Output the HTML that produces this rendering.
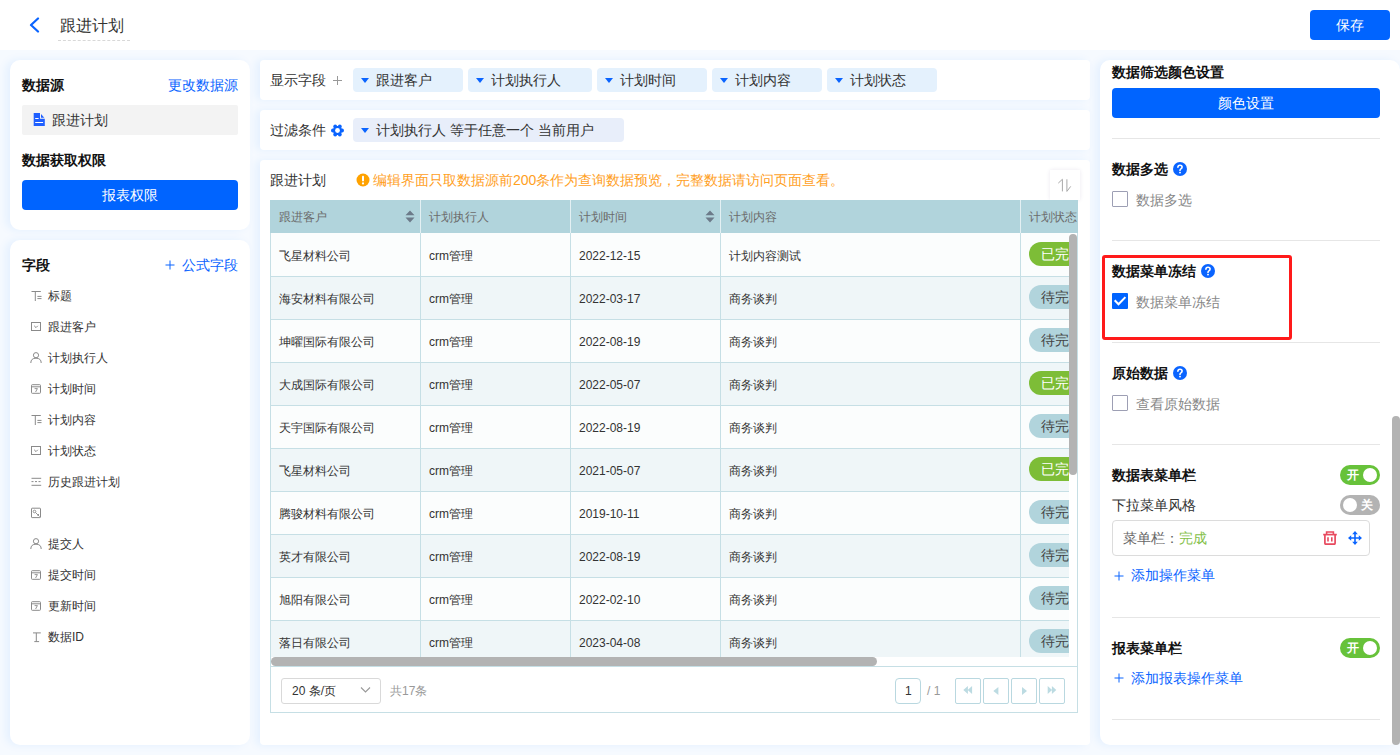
<!DOCTYPE html>
<html><head><meta charset="utf-8">
<style>
*{box-sizing:border-box;margin:0;padding:0}
html,body{width:1400px;height:755px;overflow:hidden}
body{position:relative;background:#f6faff;font-family:"Liberation Sans",sans-serif;font-size:14px;color:#333}
.a{position:absolute}
.t{position:absolute;white-space:nowrap;line-height:20px}
.panel{position:absolute;background:#fff;box-shadow:-4px 0 8px rgba(20,130,250,.08)}
.hdr{left:0;top:0;width:1400px;height:50px;background:#fff}
.b{font-weight:bold;color:#111}
.blue{color:#0a64ff}
.btn{position:absolute;background:#0064ff;color:#fff;border-radius:4px;text-align:center}
.chip{position:absolute;top:68px;height:24px;background:#e4f1fd;border-radius:4px}
.tri{position:absolute;left:8px;top:10px;width:0;height:0;border-left:4px solid transparent;border-right:4px solid transparent;border-top:5px solid #0a64ff}
.chip span{position:absolute;left:23px;top:2px;line-height:20px;white-space:nowrap;color:#333}
.fi{position:absolute;left:21px;height:20px;line-height:20px;font-size:12px;color:#333;white-space:nowrap}
.fi svg{position:absolute;left:10px;top:5px}
.fi span{position:absolute;left:27px;top:0}
.divr{position:absolute;left:12px;width:268px;height:1px;background:#e6e6e6}
.cb{position:absolute;width:16px;height:16px;border:1px solid #9d9fb4;border-radius:1px;background:#fff}
.gray{color:#888}
.q{position:absolute;width:14px;height:14px;border-radius:7px;background:#0a64ff}
.tg{position:absolute;width:40px;height:20px;border-radius:10px}
.tg .k{position:absolute;top:3px;width:14px;height:14px;border-radius:7px;background:#fff}
.tg span{position:absolute;top:0;line-height:20px;font-size:12px;color:#fff;font-weight:bold}
</style></head><body>
<svg width="0" height="0" style="position:absolute"><defs>
<symbol id="icT" viewBox="0 0 12 12"><path d="M1.5 1.5H10.8M5.3 1.5V11M7.4 6.4H11.5M7.4 8.6H11.5" stroke="#8a8a8a" stroke-width="1" fill="none"/></symbol>
<symbol id="icS" viewBox="0 0 12 12"><rect x="1.5" y="1.5" width="9" height="8" fill="none" stroke="#8a8a8a" stroke-width="1"/><path d="M4.2 4.8L6 6.6L7.8 4.8" stroke="#8a8a8a" stroke-width="1" fill="none"/></symbol>
<symbol id="icP" viewBox="0 0 12 12"><circle cx="6" cy="3.2" r="2.6" fill="none" stroke="#8a8a8a" stroke-width="1"/><path d="M0.8 11Q0.8 6.2 6 6.2Q11.2 6.2 11.2 11" fill="none" stroke="#8a8a8a" stroke-width="1"/></symbol>
<symbol id="icC" viewBox="0 0 12 12"><rect x="1.5" y="1.7" width="9" height="8.6" rx="0.8" fill="none" stroke="#8a8a8a" stroke-width="1"/><path d="M1.5 3.8H10.5" stroke="#8a8a8a" stroke-width="1"/><path d="M4.6 5.6H7.4L5.6 9" stroke="#8a8a8a" stroke-width=".9" fill="none"/></symbol>
<symbol id="icL" viewBox="0 0 12 12"><path d="M1.5 2.3H11.2M1.5 9.3H11.2" stroke="#8a8a8a" stroke-width="1"/><path d="M1.5 5.6H11.2" stroke="#8a8a8a" stroke-width="1" stroke-dasharray="2 1.5"/></symbol>
<symbol id="icI" viewBox="0 0 12 12"><rect x="1.5" y="1.2" width="9" height="9.4" rx="0.6" fill="none" stroke="#8a8a8a" stroke-width="1"/><circle cx="4.5" cy="4.5" r="1.3" fill="none" stroke="#8a8a8a" stroke-width=".9"/><path d="M5.5 5.5L9.5 9.5M7.5 8.5L9 7" stroke="#8a8a8a" stroke-width=".9"/></symbol>
<symbol id="icD" viewBox="0 0 12 12"><path d="M3 1.9H10.8M6.3 1.9V10.6M4.3 10.6H9.1" stroke="#8a8a8a" stroke-width="1" fill="none"/></symbol>
</defs></svg>
<!-- header -->
<div class="a hdr"></div>
<svg class="a" style="left:28px;top:17px" width="13" height="16" viewBox="0 0 13 16"><path d="M10 1.5 L3 8 L10 14.5" fill="none" stroke="#0a64ff" stroke-width="2.2" stroke-linecap="round" stroke-linejoin="round"/></svg>
<div class="t" style="left:60px;top:15px;font-size:16px;color:#333;line-height:22px">跟进计划</div>
<div class="a" style="left:58px;top:40px;width:72px;height:0;border-top:1px dashed #d8d8d8"></div>
<div class="btn" style="left:1310px;top:10px;width:80px;height:30px;line-height:30px">保存</div>

<!-- left panel 1 -->
<div class="panel" style="left:10px;top:60px;width:240px;height:170px;border-radius:10px"></div>
<div class="t b" style="left:22px;top:75px">数据源</div>
<div class="t blue" style="left:168px;top:75px">更改数据源</div>
<div class="a" style="left:22px;top:105px;width:216px;height:30px;background:#f3f3f3;border-radius:2px"></div>
<svg class="a" style="left:33px;top:113px" width="13" height="14" viewBox="0 0 13 14"><path d="M0.7 0H7V5.8H11.8V13.1H0.7Z" fill="#1f5fff"/><path d="M8 0.9L11.3 4.7H8Z" fill="#1f5fff"/><path d="M2.2 5.5H5.6M2.2 9.5H10.1" stroke="#fff" stroke-width="1.2"/></svg>
<div class="t" style="left:52px;top:110px;color:#333">跟进计划</div>
<div class="t b" style="left:22px;top:150px">数据获取权限</div>
<div class="btn" style="left:22px;top:180px;width:216px;height:30px;line-height:30px">报表权限</div>

<!-- left panel 2 -->
<div class="panel" style="left:10px;top:240px;width:240px;height:505px;border-radius:10px"></div>
<div class="t b" style="left:22px;top:255px">字段</div>
<svg class="a" style="left:165px;top:259.5px" width="10" height="10"><path d="M5 0.5V9.5M0.5 5H9.5" stroke="#0a64ff" stroke-width="1"/></svg><div class="t blue" style="left:182px;top:255px">公式字段</div>
<svg class="a" style="left:30px;top:290px" width="12" height="12"><use href="#icT"/></svg><div class="t" style="left:48px;top:286px;font-size:12px;color:#333">标题</div>
<svg class="a" style="left:30px;top:321px" width="12" height="12"><use href="#icS"/></svg><div class="t" style="left:48px;top:317px;font-size:12px;color:#333">跟进客户</div>
<svg class="a" style="left:30px;top:352px" width="12" height="12"><use href="#icP"/></svg><div class="t" style="left:48px;top:348px;font-size:12px;color:#333">计划执行人</div>
<svg class="a" style="left:30px;top:383px" width="12" height="12"><use href="#icC"/></svg><div class="t" style="left:48px;top:379px;font-size:12px;color:#333">计划时间</div>
<svg class="a" style="left:30px;top:414px" width="12" height="12"><use href="#icT"/></svg><div class="t" style="left:48px;top:410px;font-size:12px;color:#333">计划内容</div>
<svg class="a" style="left:30px;top:445px" width="12" height="12"><use href="#icS"/></svg><div class="t" style="left:48px;top:441px;font-size:12px;color:#333">计划状态</div>
<svg class="a" style="left:30px;top:476px" width="12" height="12"><use href="#icL"/></svg><div class="t" style="left:48px;top:472px;font-size:12px;color:#333">历史跟进计划</div>
<svg class="a" style="left:30px;top:507px" width="12" height="12"><use href="#icI"/></svg><div class="t" style="left:48px;top:503px;font-size:12px;color:#333"></div>
<svg class="a" style="left:30px;top:538px" width="12" height="12"><use href="#icP"/></svg><div class="t" style="left:48px;top:534px;font-size:12px;color:#333">提交人</div>
<svg class="a" style="left:30px;top:569px" width="12" height="12"><use href="#icC"/></svg><div class="t" style="left:48px;top:565px;font-size:12px;color:#333">提交时间</div>
<svg class="a" style="left:30px;top:600px" width="12" height="12"><use href="#icC"/></svg><div class="t" style="left:48px;top:596px;font-size:12px;color:#333">更新时间</div>
<svg class="a" style="left:30px;top:631px" width="12" height="12"><use href="#icD"/></svg><div class="t" style="left:48px;top:627px;font-size:12px;color:#333">数据ID</div>

<!-- middle cards -->
<div class="panel" style="left:260px;top:60px;width:830px;height:40px;border-radius:4px"></div>
<div class="t" style="left:270px;top:70px;color:#333">显示字段</div>
<svg class="a" style="left:333px;top:76px" width="9" height="9"><path d="M4.5 0V9M0 4.5H9" stroke="#999" stroke-width="1"/></svg>
<div class="chip" style="left:353px;width:110px"><i class="tri"></i><span>跟进客户</span></div>
<div class="chip" style="left:468px;width:124px"><i class="tri"></i><span>计划执行人</span></div>
<div class="chip" style="left:597px;width:110px"><i class="tri"></i><span>计划时间</span></div>
<div class="chip" style="left:712px;width:110px"><i class="tri"></i><span>计划内容</span></div>
<div class="chip" style="left:827px;width:110px"><i class="tri"></i><span>计划状态</span></div>

<div class="panel" style="left:260px;top:110px;width:830px;height:40px;border-radius:4px"></div>
<div class="t" style="left:270px;top:120px;color:#333">过滤条件</div>
<svg class="a" style="left:331px;top:123.5px" width="13" height="13" viewBox="0 0 13 13"><path d="M11.10 6.50 L8.80 10.48 L4.20 10.48 L1.90 6.50 L4.20 2.52 L8.80 2.52Z" fill="#0a64ff" stroke="#0a64ff" stroke-width="1.2" stroke-linejoin="round"/><circle cx="11.10" cy="6.50" r="1.9" fill="#0a64ff"/><circle cx="8.80" cy="10.48" r="1.9" fill="#0a64ff"/><circle cx="4.20" cy="10.48" r="1.9" fill="#0a64ff"/><circle cx="1.90" cy="6.50" r="1.9" fill="#0a64ff"/><circle cx="4.20" cy="2.52" r="1.9" fill="#0a64ff"/><circle cx="8.80" cy="2.52" r="1.9" fill="#0a64ff"/><circle cx="6.5" cy="6.5" r="2.4" fill="#fff"/></svg>
<div class="chip" style="left:353px;top:118px;width:271px;background:#e8eefa"><i class="tri"></i><span>计划执行人 等于任意一个 当前用户</span></div>

<div class="panel" style="left:260px;top:160px;width:830px;height:585px;border-radius:4px"></div>
<div class="t" style="left:270px;top:170px;color:#333">跟进计划</div>
<svg class="a" style="left:356px;top:173px" width="14" height="14" viewBox="0 0 14 14"><circle cx="7" cy="7" r="6.5" fill="#ffa200"/><rect x="6" y="2.8" width="2" height="5.6" rx="0.8" fill="#fff"/><circle cx="7" cy="10.4" r="1.1" fill="#fff"/></svg>
<div class="t" style="left:373px;top:170px;color:#ffa01e">编辑界面只取数据源前200条作为查询数据预览，完整数据请访问页面查看。</div>
<div class="a" style="left:1050px;top:170px;width:30px;height:30px;background:#fff;box-shadow:0 0 4px rgba(60,40,120,.10)"></div>
<svg class="a" style="left:1056px;top:177px" width="18" height="16" viewBox="0 0 18 16"><path d="M6.4 14.4V2.3L2.3 6.1M10.9 2.3V14.4L14.7 9.4" fill="none" stroke="#a8a8a8" stroke-width="1"/></svg>
<!-- table -->
<div class="a" style="left:270px;top:200px;width:808px;height:33px;background:#b1d4dc"></div>
<div class="a" style="left:420px;top:200px;width:1px;height:33px;background:#e4f0f3"></div>
<div class="a" style="left:570px;top:200px;width:1px;height:33px;background:#e4f0f3"></div>
<div class="a" style="left:720px;top:200px;width:1px;height:33px;background:#e4f0f3"></div>
<div class="a" style="left:1020px;top:200px;width:1px;height:33px;background:#e4f0f3"></div>
<div class="t" style="left:279px;top:207px;font-size:12px;color:#6b6b6b">跟进客户</div>
<div class="t" style="left:429px;top:207px;font-size:12px;color:#6b6b6b">计划执行人</div>
<div class="t" style="left:579px;top:207px;font-size:12px;color:#6b6b6b">计划时间</div>
<div class="t" style="left:729px;top:207px;font-size:12px;color:#6b6b6b">计划内容</div>
<div class="t" style="left:1029px;top:207px;font-size:12px;color:#6b6b6b">计划状态</div>
<svg class="a" style="left:405px;top:210px" width="10" height="13" viewBox="0 0 10 13"><path d="M5 0.5L9.5 5.3H0.5Z M0.5 7.5H9.5L5 12.5Z" fill="#6c7a89"/></svg>
<svg class="a" style="left:705px;top:210px" width="10" height="13" viewBox="0 0 10 13"><path d="M5 0.5L9.5 5.3H0.5Z M0.5 7.5H9.5L5 12.5Z" fill="#6c7a89"/></svg>
<div class="a" style="left:270px;top:233px;width:799px;height:424px;overflow:hidden">
<div class="a" style="left:0;top:0px;width:808px;height:43px;background:#fbfdfd"></div>
<div class="t" style="left:9px;top:13px;font-size:12px;color:#333">飞星材料公司</div>
<div class="t" style="left:159px;top:13px;font-size:12px;color:#333">crm管理</div>
<div class="t" style="left:309px;top:13px;font-size:12px;color:#333">2022-12-15</div>
<div class="t" style="left:459px;top:13px;font-size:12px;color:#333">计划内容测试</div>
<div class="a" style="left:759px;top:9px;width:70px;height:24px;border-radius:12px;background:#7dbd37"></div><div class="t" style="left:771px;top:11px;font-size:14px;color:#fff">已完成</div>
<div class="a" style="left:0;top:43px;width:808px;height:43px;background:#eff6f8"></div>
<div class="t" style="left:9px;top:56px;font-size:12px;color:#333">海安材料有限公司</div>
<div class="t" style="left:159px;top:56px;font-size:12px;color:#333">crm管理</div>
<div class="t" style="left:309px;top:56px;font-size:12px;color:#333">2022-03-17</div>
<div class="t" style="left:459px;top:56px;font-size:12px;color:#333">商务谈判</div>
<div class="a" style="left:759px;top:52px;width:70px;height:24px;border-radius:12px;background:#b1d4dc"></div><div class="t" style="left:771px;top:54px;font-size:14px;color:#444">待完成</div>
<div class="a" style="left:0;top:86px;width:808px;height:43px;background:#fbfdfd"></div>
<div class="t" style="left:9px;top:99px;font-size:12px;color:#333">坤曜国际有限公司</div>
<div class="t" style="left:159px;top:99px;font-size:12px;color:#333">crm管理</div>
<div class="t" style="left:309px;top:99px;font-size:12px;color:#333">2022-08-19</div>
<div class="t" style="left:459px;top:99px;font-size:12px;color:#333">商务谈判</div>
<div class="a" style="left:759px;top:95px;width:70px;height:24px;border-radius:12px;background:#b1d4dc"></div><div class="t" style="left:771px;top:97px;font-size:14px;color:#444">待完成</div>
<div class="a" style="left:0;top:129px;width:808px;height:43px;background:#eff6f8"></div>
<div class="t" style="left:9px;top:142px;font-size:12px;color:#333">大成国际有限公司</div>
<div class="t" style="left:159px;top:142px;font-size:12px;color:#333">crm管理</div>
<div class="t" style="left:309px;top:142px;font-size:12px;color:#333">2022-05-07</div>
<div class="t" style="left:459px;top:142px;font-size:12px;color:#333">商务谈判</div>
<div class="a" style="left:759px;top:138px;width:70px;height:24px;border-radius:12px;background:#7dbd37"></div><div class="t" style="left:771px;top:140px;font-size:14px;color:#fff">已完成</div>
<div class="a" style="left:0;top:172px;width:808px;height:43px;background:#fbfdfd"></div>
<div class="t" style="left:9px;top:185px;font-size:12px;color:#333">天宇国际有限公司</div>
<div class="t" style="left:159px;top:185px;font-size:12px;color:#333">crm管理</div>
<div class="t" style="left:309px;top:185px;font-size:12px;color:#333">2022-08-19</div>
<div class="t" style="left:459px;top:185px;font-size:12px;color:#333">商务谈判</div>
<div class="a" style="left:759px;top:181px;width:70px;height:24px;border-radius:12px;background:#b1d4dc"></div><div class="t" style="left:771px;top:183px;font-size:14px;color:#444">待完成</div>
<div class="a" style="left:0;top:215px;width:808px;height:43px;background:#eff6f8"></div>
<div class="t" style="left:9px;top:228px;font-size:12px;color:#333">飞星材料公司</div>
<div class="t" style="left:159px;top:228px;font-size:12px;color:#333">crm管理</div>
<div class="t" style="left:309px;top:228px;font-size:12px;color:#333">2021-05-07</div>
<div class="t" style="left:459px;top:228px;font-size:12px;color:#333">商务谈判</div>
<div class="a" style="left:759px;top:224px;width:70px;height:24px;border-radius:12px;background:#7dbd37"></div><div class="t" style="left:771px;top:226px;font-size:14px;color:#fff">已完成</div>
<div class="a" style="left:0;top:258px;width:808px;height:43px;background:#fbfdfd"></div>
<div class="t" style="left:9px;top:271px;font-size:12px;color:#333">腾骏材料有限公司</div>
<div class="t" style="left:159px;top:271px;font-size:12px;color:#333">crm管理</div>
<div class="t" style="left:309px;top:271px;font-size:12px;color:#333">2019-10-11</div>
<div class="t" style="left:459px;top:271px;font-size:12px;color:#333">商务谈判</div>
<div class="a" style="left:759px;top:267px;width:70px;height:24px;border-radius:12px;background:#b1d4dc"></div><div class="t" style="left:771px;top:269px;font-size:14px;color:#444">待完成</div>
<div class="a" style="left:0;top:301px;width:808px;height:43px;background:#eff6f8"></div>
<div class="t" style="left:9px;top:314px;font-size:12px;color:#333">英才有限公司</div>
<div class="t" style="left:159px;top:314px;font-size:12px;color:#333">crm管理</div>
<div class="t" style="left:309px;top:314px;font-size:12px;color:#333">2022-08-19</div>
<div class="t" style="left:459px;top:314px;font-size:12px;color:#333">商务谈判</div>
<div class="a" style="left:759px;top:310px;width:70px;height:24px;border-radius:12px;background:#b1d4dc"></div><div class="t" style="left:771px;top:312px;font-size:14px;color:#444">待完成</div>
<div class="a" style="left:0;top:344px;width:808px;height:43px;background:#fbfdfd"></div>
<div class="t" style="left:9px;top:357px;font-size:12px;color:#333">旭阳有限公司</div>
<div class="t" style="left:159px;top:357px;font-size:12px;color:#333">crm管理</div>
<div class="t" style="left:309px;top:357px;font-size:12px;color:#333">2022-02-10</div>
<div class="t" style="left:459px;top:357px;font-size:12px;color:#333">商务谈判</div>
<div class="a" style="left:759px;top:353px;width:70px;height:24px;border-radius:12px;background:#b1d4dc"></div><div class="t" style="left:771px;top:355px;font-size:14px;color:#444">待完成</div>
<div class="a" style="left:0;top:387px;width:808px;height:43px;background:#eff6f8"></div>
<div class="t" style="left:9px;top:400px;font-size:12px;color:#333">落日有限公司</div>
<div class="t" style="left:159px;top:400px;font-size:12px;color:#333">crm管理</div>
<div class="t" style="left:309px;top:400px;font-size:12px;color:#333">2023-04-08</div>
<div class="t" style="left:459px;top:400px;font-size:12px;color:#333">商务谈判</div>
<div class="a" style="left:759px;top:396px;width:70px;height:24px;border-radius:12px;background:#b1d4dc"></div><div class="t" style="left:771px;top:398px;font-size:14px;color:#444">待完成</div>
<div class="a" style="left:150px;top:0;width:1px;height:424px;background:#c6dfe5"></div>
<div class="a" style="left:300px;top:0;width:1px;height:424px;background:#c6dfe5"></div>
<div class="a" style="left:450px;top:0;width:1px;height:424px;background:#c6dfe5"></div>
<div class="a" style="left:750px;top:0;width:1px;height:424px;background:#c6dfe5"></div>
<div class="a" style="left:0;top:43px;width:808px;height:1px;background:#c6dfe5"></div><div class="a" style="left:0;top:86px;width:808px;height:1px;background:#c6dfe5"></div><div class="a" style="left:0;top:129px;width:808px;height:1px;background:#c6dfe5"></div><div class="a" style="left:0;top:172px;width:808px;height:1px;background:#c6dfe5"></div><div class="a" style="left:0;top:215px;width:808px;height:1px;background:#c6dfe5"></div><div class="a" style="left:0;top:258px;width:808px;height:1px;background:#c6dfe5"></div><div class="a" style="left:0;top:301px;width:808px;height:1px;background:#c6dfe5"></div><div class="a" style="left:0;top:344px;width:808px;height:1px;background:#c6dfe5"></div><div class="a" style="left:0;top:387px;width:808px;height:1px;background:#c6dfe5"></div><div class="a" style="left:0;top:0;width:1px;height:424px;background:#c6dfe5"></div>
</div>
<div class="a" style="left:1077px;top:233px;width:1px;height:480px;background:#c6dfe5"></div>
<div class="a" style="left:1069px;top:234px;width:8px;height:241px;border-radius:4px;background:#b3b3b3"></div>
<div class="a" style="left:270px;top:657px;width:1px;height:56px;background:#c6dfe5"></div>
<div class="a" style="left:271px;top:657px;width:606px;height:9px;border-radius:4.5px;background:#b3b3b3"></div>
<div class="a" style="left:270px;top:666px;width:808px;height:1px;background:#c6dfe5"></div>
<div class="a" style="left:270px;top:712px;width:808px;height:1px;background:#c6dfe5"></div>
<div class="a" style="left:281px;top:678px;width:100px;height:26px;border:1px solid #d9d9d9;border-radius:3px;background:#fff"></div>
<div class="t" style="left:292px;top:681px;font-size:12px;color:#333">20 条/页</div>
<svg class="a" style="left:360px;top:686px" width="11" height="8" viewBox="0 0 11 8"><path d="M1 1.5L5.5 6L10 1.5" fill="none" stroke="#999" stroke-width="1.1"/></svg>
<div class="t" style="left:390px;top:681px;font-size:12px;color:#999">共17条</div>
<div class="a" style="left:895px;top:678px;width:26px;height:26px;border:1px solid #b9d8e0;border-radius:4px;background:#fff"></div>
<div class="t" style="left:905px;top:681px;font-size:12px;color:#333">1</div>
<div class="t" style="left:927px;top:681px;font-size:12px;color:#999">/ 1</div>
<div class="a" style="left:955px;top:678px;width:26px;height:26px;border:1px solid #b9d8e0;border-radius:2px;background:#fff"></div>
<svg class="a" style="left:961px;top:684px" width="13" height="13" viewBox="0 0 13 13"><path d="M6.9 2L2.3 6L6.9 10ZM11.1 2L6.7 6L11.1 10Z" fill="#bcdbe2"/></svg>
<div class="a" style="left:983px;top:678px;width:26px;height:26px;border:1px solid #b9d8e0;border-radius:2px;background:#fff"></div>
<svg class="a" style="left:989px;top:684px" width="13" height="13" viewBox="0 0 13 13"><path d="M9.4 3L4.3 7L9.4 11Z" fill="#bcdbe2"/></svg>
<div class="a" style="left:1011px;top:678px;width:26px;height:26px;border:1px solid #b9d8e0;border-radius:2px;background:#fff"></div>
<svg class="a" style="left:1017px;top:684px" width="13" height="13" viewBox="0 0 13 13"><path d="M5 3L10 7L5 11Z" fill="#bcdbe2"/></svg>
<div class="a" style="left:1039px;top:678px;width:26px;height:26px;border:1px solid #b9d8e0;border-radius:2px;background:#fff"></div>
<svg class="a" style="left:1045px;top:684px" width="13" height="13" viewBox="0 0 13 13"><path d="M2.7 2L7.1 6L2.7 10ZM6.9 2L11.3 6L6.9 10Z" fill="#bcdbe2"/></svg>
<!-- right panel -->
<div class="panel" style="left:1100px;top:60px;width:300px;height:685px;border-radius:10px"></div>
<div class="t b" style="left:1112px;top:62px">数据筛选颜色设置</div>
<div class="btn" style="left:1112px;top:88px;width:268px;height:30px;line-height:30px">颜色设置</div>
<div class="a" style="left:1112px;top:138px;width:268px;height:1px;background:#e6e6e6"></div>
<div class="a" style="left:1112px;top:240px;width:268px;height:1px;background:#e6e6e6"></div>
<div class="a" style="left:1112px;top:342px;width:268px;height:1px;background:#e6e6e6"></div>
<div class="a" style="left:1112px;top:444px;width:268px;height:1px;background:#e6e6e6"></div>
<div class="a" style="left:1112px;top:617px;width:268px;height:1px;background:#e6e6e6"></div>
<div class="a" style="left:1112px;top:719px;width:268px;height:1px;background:#e6e6e6"></div>
<div class="t b" style="left:1112px;top:159px">数据多选</div><svg class="a" style="left:1173px;top:162px" width="14" height="14" viewBox="0 0 14 14"><circle cx="7" cy="7" r="7" fill="#0a64ff"/><path d="M4.9 5.3Q4.9 3.2 7 3.2Q9.1 3.2 9.1 5.1Q9.1 6.2 7.9 6.9Q7 7.4 7 8.4" fill="none" stroke="#fff" stroke-width="1.6" stroke-linecap="round"/><circle cx="7" cy="10.6" r="0.95" fill="#fff"/></svg>
<div class="cb" style="left:1112px;top:191px"></div><div class="t gray" style="left:1136px;top:190px">数据多选</div>
<div class="t b" style="left:1112px;top:261px">数据菜单冻结</div><svg class="a" style="left:1201px;top:264px" width="14" height="14" viewBox="0 0 14 14"><circle cx="7" cy="7" r="7" fill="#0a64ff"/><path d="M4.9 5.3Q4.9 3.2 7 3.2Q9.1 3.2 9.1 5.1Q9.1 6.2 7.9 6.9Q7 7.4 7 8.4" fill="none" stroke="#fff" stroke-width="1.6" stroke-linecap="round"/><circle cx="7" cy="10.6" r="0.95" fill="#fff"/></svg>
<div class="a" style="left:1112px;top:293px;width:16px;height:16px;border-radius:1px;background:#0064ff"></div><svg class="a" style="left:1112px;top:293px" width="16" height="16" viewBox="0 0 16 16"><path d="M2.7 7.3L6.5 11.3L13.4 4.1" fill="none" stroke="#fff" stroke-width="2"/></svg><div class="t gray" style="left:1136px;top:292px">数据菜单冻结</div>
<div class="a" style="left:1102px;top:255px;width:190px;height:85px;border:3px solid #ff1a1a;border-radius:3px"></div>
<div class="t b" style="left:1112px;top:363px">原始数据</div><svg class="a" style="left:1173px;top:366px" width="14" height="14" viewBox="0 0 14 14"><circle cx="7" cy="7" r="7" fill="#0a64ff"/><path d="M4.9 5.3Q4.9 3.2 7 3.2Q9.1 3.2 9.1 5.1Q9.1 6.2 7.9 6.9Q7 7.4 7 8.4" fill="none" stroke="#fff" stroke-width="1.6" stroke-linecap="round"/><circle cx="7" cy="10.6" r="0.95" fill="#fff"/></svg>
<div class="cb" style="left:1112px;top:395px"></div><div class="t gray" style="left:1136px;top:394px">查看原始数据</div>
<div class="t b" style="left:1112px;top:465px">数据表菜单栏</div>
<div class="tg" style="left:1340px;top:465px;background:#67c23a"><span style="left:7px">开</span><i class="k" style="left:23px"></i></div>
<div class="t" style="left:1112px;top:495px;color:#333">下拉菜单风格</div>
<div class="tg" style="left:1340px;top:495px;background:#b3b3b3"><i class="k" style="left:3px"></i><span style="left:21px">关</span></div>
<div class="a" style="left:1112px;top:520px;width:258px;height:36px;border:1px solid #dcdcdc;border-radius:4px"></div>
<div class="t" style="left:1123px;top:528px;color:#666">菜单栏：</div><div class="t" style="left:1179px;top:528px;color:#85c14a">完成</div>
<svg class="a" style="left:1323px;top:531px" width="14" height="14" viewBox="0 0 14 14"><path d="M0.2 3.6H13.8" stroke="#e84a5f" stroke-width="1.7"/><path d="M3.6 3.6V1H10.4V3.6" fill="none" stroke="#e84a5f" stroke-width="1.6"/><path d="M1.9 3.6V12.2Q1.9 13.2 2.9 13.2H11.1Q12.1 13.2 12.1 12.2V3.6" fill="none" stroke="#e84a5f" stroke-width="1.7"/><path d="M5 6.2V10.6M8.8 6.2V10.6" stroke="#e84a5f" stroke-width="1.6"/></svg>
<svg class="a" style="left:1348px;top:531px" width="14" height="14" viewBox="0 0 14 14"><path d="M7 2V12M2 7H12" stroke="#0a64ff" stroke-width="1.6"/><path d="M7 0L9.8 3.2H4.2ZM7 14L4.2 10.8H9.8ZM0 7L3.2 4.2V9.8ZM14 7L10.8 9.8V4.2Z" fill="#0a64ff"/></svg>
<svg class="a" style="left:1114px;top:571px" width="10" height="10"><path d="M5 0.5V9.5M0.5 5H9.5" stroke="#0a64ff" stroke-width="1"/></svg><div class="t blue" style="left:1131px;top:565px">添加操作菜单</div>
<div class="t b" style="left:1112px;top:638px">报表菜单栏</div>
<div class="tg" style="left:1340px;top:638px;background:#67c23a"><span style="left:7px">开</span><i class="k" style="left:23px"></i></div>
<svg class="a" style="left:1114px;top:673px" width="10" height="10"><path d="M5 0.5V9.5M0.5 5H9.5" stroke="#0a64ff" stroke-width="1"/></svg><div class="t blue" style="left:1131px;top:668px">添加报表操作菜单</div>
<div class="a" style="left:1392px;top:416px;width:8px;height:329px;border-radius:4px;background:#b3b3b3"></div>
</body></html>
